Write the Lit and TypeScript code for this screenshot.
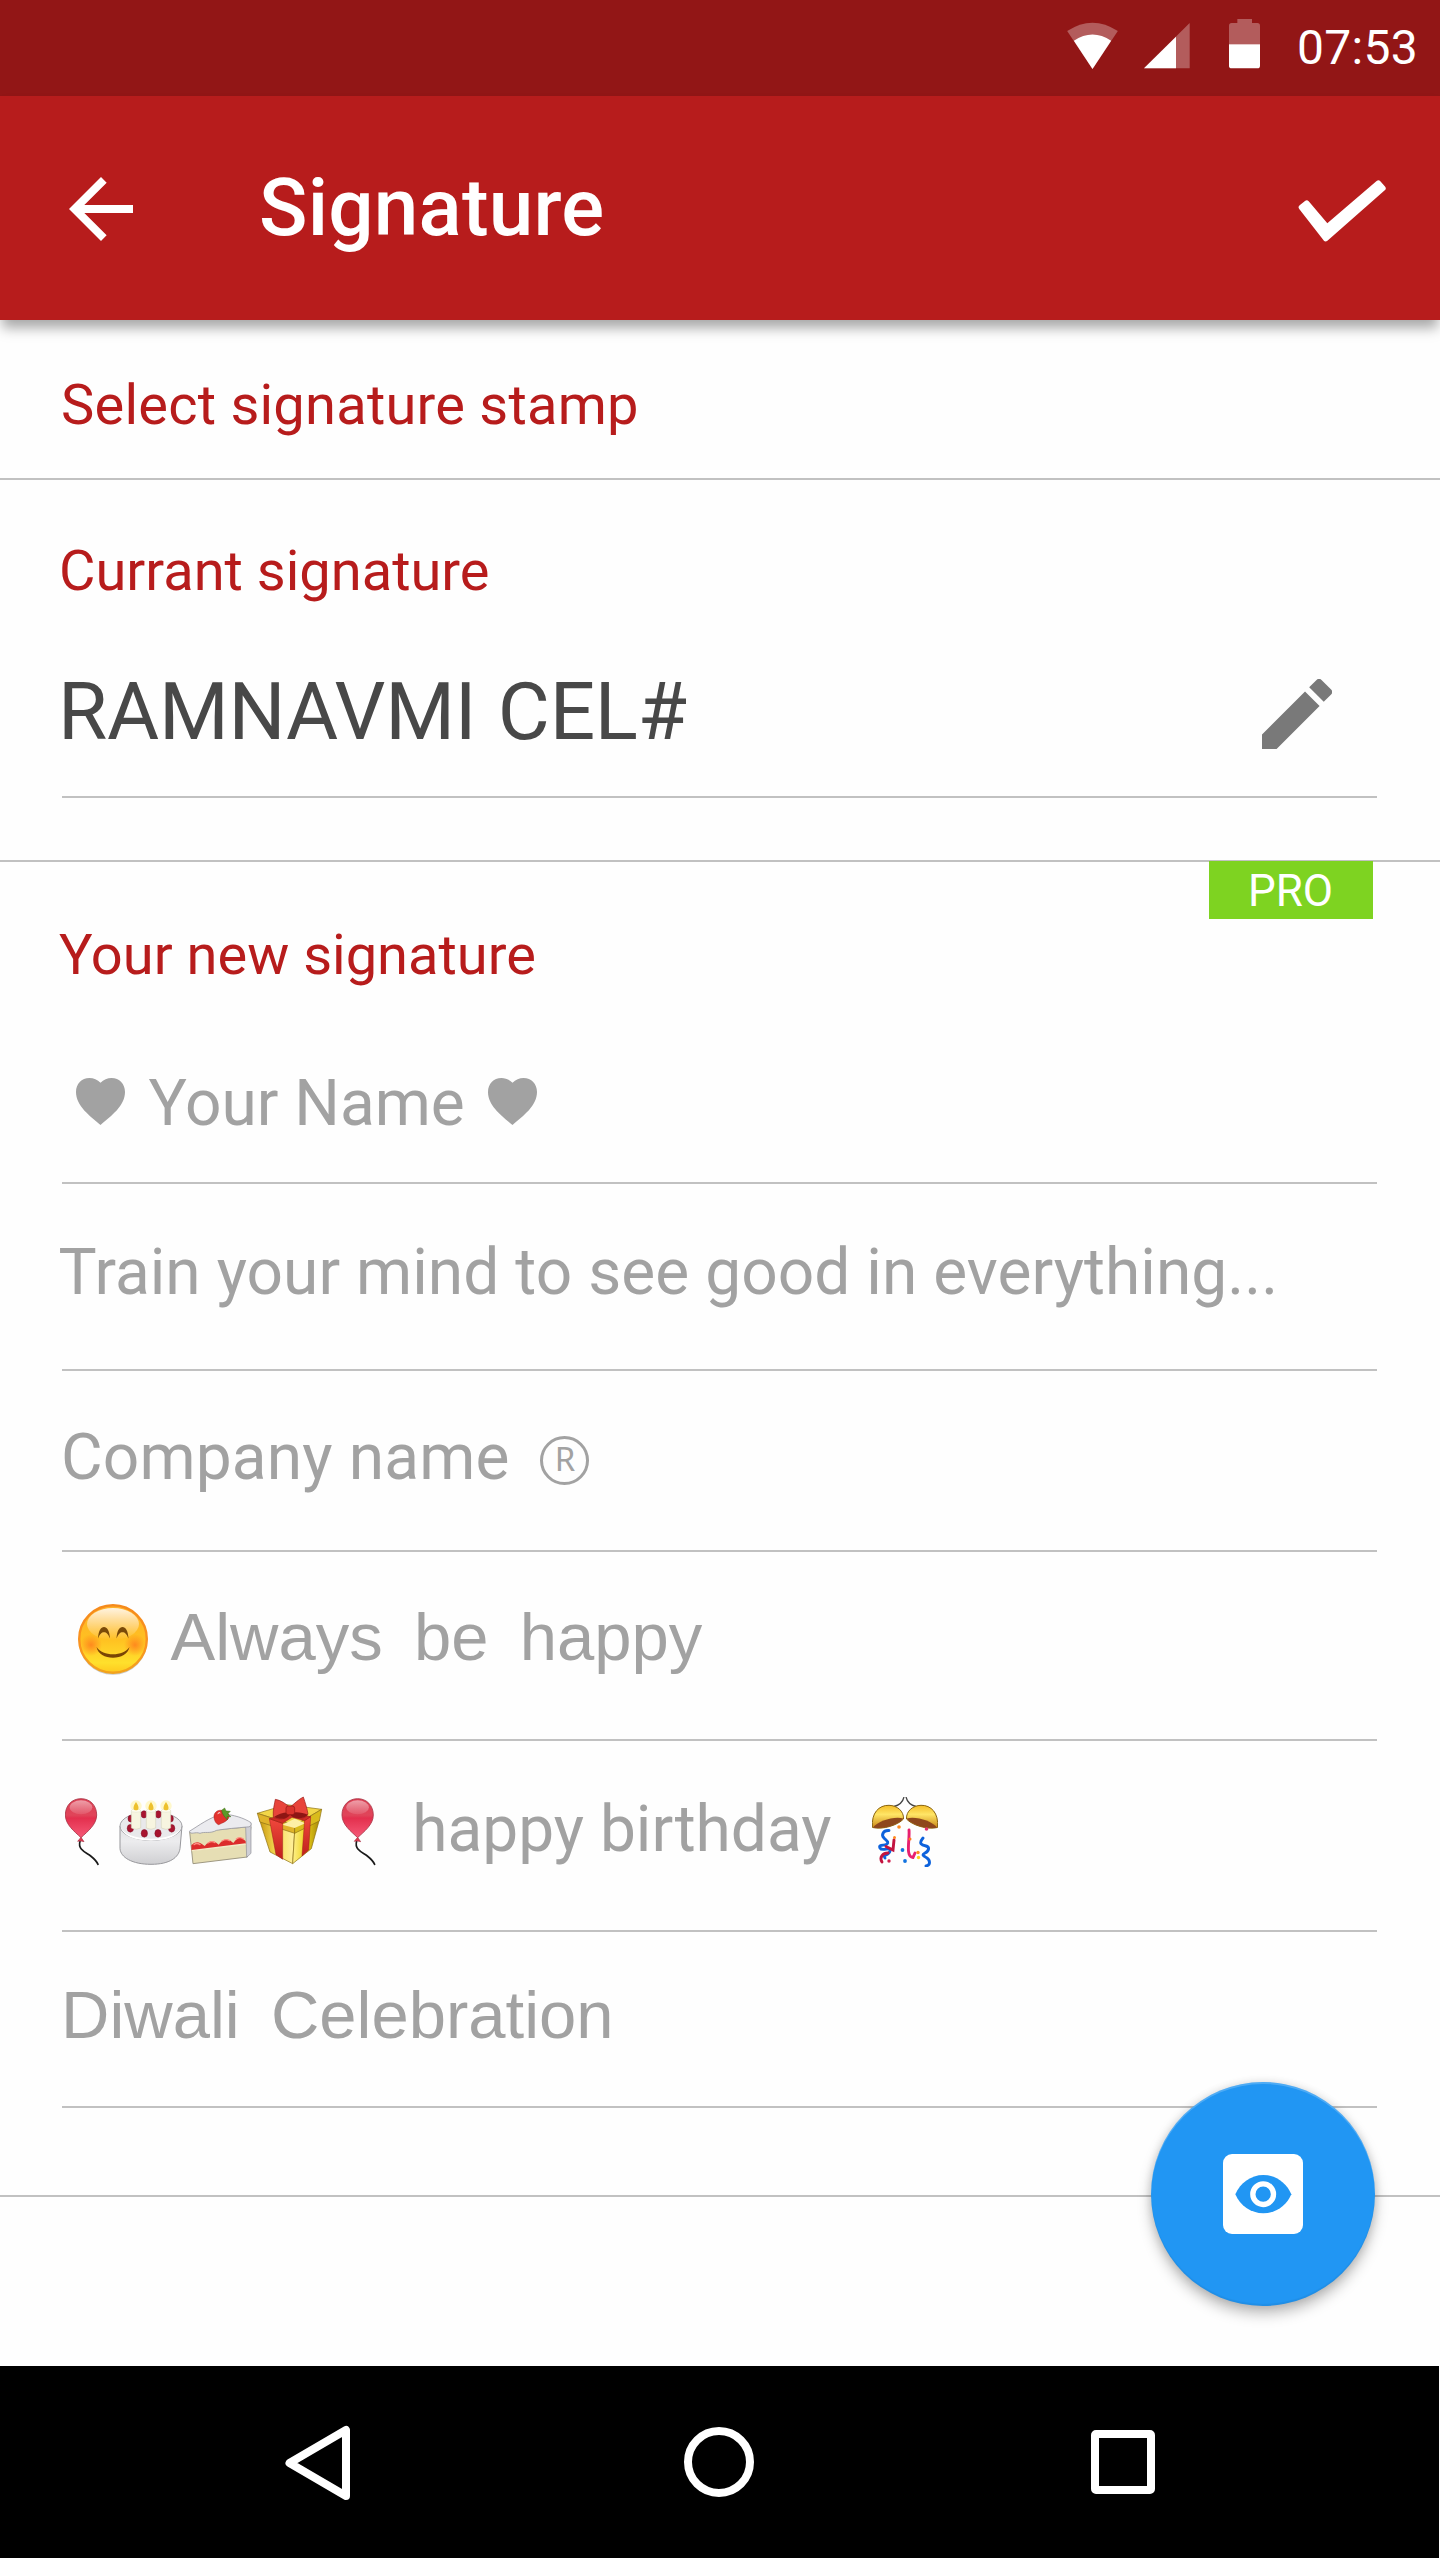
import { LitElement, html, svg, css } from "lit";
import { customElement } from "lit/decorators.js";

const wifi = html`<svg class="wifi" width="51" height="50" viewBox="79.5 56 153 150">
  <path d="M156 206L80 92Q156 42 232 92Z" fill="#fff" fill-opacity=".3"/>
  <path d="M156 206L100 121Q156 84 212 121Z" fill="#fff"/>
</svg>`;

const signal = html`<svg class="signal" width="46" height="50" viewBox="312 56 138 150">
  <path d="M312 204L449 68V204Z" fill="#fff" fill-opacity=".3"/>
  <path d="M312 204L408 109V204Z" fill="#fff"/>
</svg>`;

const battery = html`<svg class="battery" width="31" height="50" viewBox="567 56 93 150">
  <path d="M567 132V76q0-8 8-8H592V56H636V68H652q8 0 8 8V132Z" fill="#fff" fill-opacity=".3"/>
  <path d="M567 132H660V196q0 8-8 8H575q-8 0-8-8Z" fill="#fff"/>
</svg>`;

const arrow = html`<svg class="arrow" width="96" height="96" viewBox="0 0 24 24">
  <path fill="#fff" d="M20 11H7.83l5.59-5.59L12 4l-8 8 8 8 1.41-1.41L7.83 13H20v-2z"/>
</svg>`;

const check = html`<svg class="check" width="88" height="64" viewBox="775 536 264 192">
  <path d="M785 621L801 608L862 680L1016 548L1030 564L858 715Z" fill="#fff" stroke="#fff" stroke-width="16" stroke-linejoin="round"/>
</svg>`;

const pencil = html`<svg class="pencil" width="70" height="70" viewBox="3 3 18 18">
  <path fill="#797979" d="M3 17.25V21h3.75L17.81 9.94l-3.75-3.75L3 17.25zM20.71 7.04a.996.996 0 0 0 0-1.41l-2.34-2.34a.996.996 0 0 0-1.41 0l-1.83 1.83 3.75 3.75 1.83-1.83z"/>
</svg>`;

const heart = html`<svg class="heart" width="49" height="47" viewBox="0 0 49 47">
  <path fill="#a2a2a2" d="M24.5 4.8C21.500 1.500 17.500 0 13.500 0C5.500 0 0 6 0 14C0 28 14 38 24.500 47C35 38 49 28 49 14C49 6 43.500 0 35.500 0C31.500 0 27.500 1.500 24.500 4.800Z"/>
</svg>`;

const smile = html`<svg class="smile" width="70" height="72" viewBox="0 0 70 72">
  <defs>
    <linearGradient id="face" x1="0" y1="0" x2="0" y2="1">
      <stop offset="0" stop-color="#ffb02a"/><stop offset=".5" stop-color="#ffc021"/><stop offset=".85" stop-color="#ffe02c"/><stop offset="1" stop-color="#ffc81e"/>
    </linearGradient>
    <linearGradient id="rim" x1="0" y1="0" x2="0" y2="1">
      <stop offset="0" stop-color="#f58a1c"/><stop offset=".6" stop-color="#fb9420"/><stop offset="1" stop-color="#f2a31c"/>
    </linearGradient>
    <linearGradient id="gloss" x1="0" y1="0" x2="0" y2="1">
      <stop offset="0" stop-color="#fff" stop-opacity=".85"/><stop offset="1" stop-color="#fff" stop-opacity="0"/>
    </linearGradient>
    <radialGradient id="blush"><stop offset="0" stop-color="#ff7a1c" stop-opacity=".8"/><stop offset="1" stop-color="#ff7a1c" stop-opacity="0"/></radialGradient>
  </defs>
  <circle cx="35" cy="36.300" r="34.500" fill="#888" fill-opacity=".45"/>
  <circle cx="35" cy="35" r="33.800" fill="url(#face)" stroke="url(#rim)" stroke-width="2.400"/>
  <ellipse cx="35" cy="20" rx="26" ry="16" fill="url(#gloss)"/>
  <circle cx="13" cy="41" r="11" fill="url(#blush)"/>
  <circle cx="57" cy="41" r="11" fill="url(#blush)"/>
  <path d="M20 34.500C20.500 26.500 23 23 26 23S31.500 26.500 32 34.500C30 30 28.500 28.300 26 28.300S22 30 20 34.500Z" fill="#7a4a08"/>
  <path d="M38.500 34.500C39 26.500 41.500 23 44.500 23S50 26.500 50.500 34.500C48.500 30 47 28.300 44.500 28.300S40.500 30 38.500 34.500Z" fill="#7a4a08"/>
  <path d="M18.500 43C22 48 28 50.300 35 50.300S48 48 51.500 43C50 50 43 53.800 35 53.800S20 50 18.500 43Z" fill="#7a4505"/>
</svg>`;

const balloon = (x: number) => svg`<g transform="translate(${x} 0)">
  <path d="M120 214C112 240 140 248 152 258C162 266 170 274 174 283" fill="none" stroke="#1a1a1a" stroke-width="5" stroke-linecap="round"/>
  <path d="M123 86C150 86 170 106 170 135C170 164 143 184 123 203C103 184 76 164 76 135C76 106 96 86 123 86Z" fill="url(#balloon)" stroke="#a83245" stroke-width="2.500"/>
  <path d="M123 202L113 214Q122 211 132 215Z" fill="#e23a50" stroke="#a83245" stroke-width="2"/>
  <ellipse cx="123" cy="112" rx="34" ry="21" fill="url(#shine)"/>
</g>`;

const candle = (x: number) => svg`<g transform="translate(${x} 0)">
  <circle cx="0" cy="108" r="17" fill="#fff3a0" fill-opacity=".55"/>
  <path d="M-14 122V174Q0 182 14 174V122Z" fill="#f7f5e0" stroke="#cfcdb4" stroke-width="1.500"/>
  <ellipse cx="0" cy="122" rx="14" ry="4.500" fill="#fffef2" stroke="#cfcdb4" stroke-width="1"/>
  <path d="M0 96C10 110 10 121 0 121S-10 110 0 96Z" fill="#edc02c"/>
</g>`;

const party = html`<svg class="party" width="66" height="70" viewBox="0 0 66 70">
  <defs>
    <linearGradient id="bowl" x1="0" y1="0" x2="0" y2="1">
      <stop offset="0" stop-color="#f3bd28"/><stop offset=".4" stop-color="#ffe566"/><stop offset="1" stop-color="#c98512"/>
    </linearGradient>
  </defs>
  <path d="M22 9.500C28 8 31 4 32 0M44 9.500C38 8 35 4 34 0" fill="none" stroke="#444" stroke-width="1.300"/>
  <g>
    <path d="M.5 30.500C-1 16 7 8 17 8.300C25 8.500 32 14 31.500 22C26 28 11 33 .5 30.500Z" fill="url(#bowl)" stroke="#8a6410" stroke-width="1"/>
    <path d="M1 30.500C6 24 22 19 31.300 21.500C28 27 11 33 1 30.500Z" fill="#8e471c"/>
  </g>
  <g transform="translate(66 0) scale(-1 1)">
    <path d="M.5 30.500C-1 16 7 8 17 8.300C25 8.500 32 14 31.500 22C26 28 11 33 .5 30.500Z" fill="url(#bowl)" stroke="#8a6410" stroke-width="1"/>
    <path d="M1 30.500C6 24 22 19 31.300 21.500C28 27 11 33 1 30.500Z" fill="#8e471c"/>
  </g>
  <g fill="none" stroke-width="2.900" stroke-linecap="round">
    <path d="M17 33.500C11 33 9 38 12 41S17 45 15 47S6 47 8 51S19 49 18 54S10 57 13 61" stroke="#0d62dc"/>
    <path d="M22 43L21 53L14 49.500M16 56C11 56 7 60 10 65" stroke="#c2133f"/>
    <path d="M37 33C38 42 33 60 41 60.500L43 56" stroke="#e8206f"/>
    <path d="M51 41C46 47 50 48 54 49S57 54 53 56S52 59 55 61S59 68 54 69" stroke="#0d62dc"/>
  </g>
  <circle cx="27" cy="30" r="1.800" fill="#ff8a1e"/><circle cx="22.500" cy="40.500" r="1.500" fill="#ff8a1e"/>
  <circle cx="38" cy="42" r="1.500" fill="#ff7a1e"/><circle cx="54.500" cy="32" r="1.800" fill="#e0306f"/>
  <circle cx="30.500" cy="53" r="1.900" fill="#1273e0"/><circle cx="33" cy="64" r="1.900" fill="#1273e0"/>
  <circle cx="17" cy="64" r="1.700" fill="#d0204f"/><circle cx="46" cy="55.500" r="1.700" fill="#ff8a1e"/>
  <circle cx="46.500" cy="60.500" r="1.700" fill="#ffcf1e"/>
</svg>`;

const treats = html`<svg class="treats" width="311.670" height="71.670" viewBox="75 75 935 215">
  <defs>
    <linearGradient id="balloon" x1="0" y1="0" x2="0" y2="1">
      <stop offset="0" stop-color="#dc3c50"/><stop offset=".42" stop-color="#e0455a"/><stop offset=".5" stop-color="#e3304e"/><stop offset="1" stop-color="#f65a78"/>
    </linearGradient>
    <linearGradient id="shine" x1="0" y1="0" x2="0" y2="1"><stop offset="0" stop-color="#fff" stop-opacity=".5"/><stop offset="1" stop-color="#fff" stop-opacity=".1"/></linearGradient>
    <linearGradient id="icing" x1="0" y1="0" x2="0" y2="1"><stop offset="0" stop-color="#e2e2e4"/><stop offset=".4" stop-color="#ececee"/><stop offset="1" stop-color="#cfcfd2"/></linearGradient>
    <linearGradient id="gold" x1="0" y1="0" x2="1" y2="0"><stop offset="0" stop-color="#c8960c"/><stop offset=".5" stop-color="#f8e05a"/><stop offset="1" stop-color="#fff0a0"/></linearGradient>
    <linearGradient id="goldDark" x1="0" y1="0" x2="1" y2="0"><stop offset="0" stop-color="#fff08a"/><stop offset=".5" stop-color="#ecd018"/><stop offset="1" stop-color="#a88a0a"/></linearGradient>
    <linearGradient id="ribbon" x1="0" y1="0" x2="0" y2="1"><stop offset="0" stop-color="#f0483c"/><stop offset="1" stop-color="#c0201c"/></linearGradient>
  </defs>
  ${balloon(0)}
  <g>
    <path d="M240 168V236C242 262 276 283 333 283S416 262 420 236L426 168Z" fill="url(#icing)" stroke="#98989c" stroke-width="3"/>
    <ellipse cx="333" cy="168" rx="93" ry="43" fill="#e9e9eb" stroke="#a0a0a4" stroke-width="3"/>
    <path d="M242 172C250 198 284 212 333 212S416 198 424 172C414 193 380 206 333 206S252 193 242 172Z" fill="#fff"/>
    <g fill="#a8142f" stroke="#7c0e24" stroke-width="1.500">
      <ellipse cx="272" cy="146" rx="8" ry="10"/><ellipse cx="312" cy="133" rx="9" ry="11"/><ellipse cx="355" cy="133" rx="9" ry="11"/><ellipse cx="392" cy="146" rx="8" ry="10"/>
      <ellipse cx="271" cy="175" rx="9.500" ry="11.500"/><ellipse cx="313" cy="190" rx="9.500" ry="11.500"/><ellipse cx="354" cy="190" rx="9.500" ry="11.500"/><ellipse cx="395" cy="175" rx="9.500" ry="11.500"/>
    </g>
    ${candle(288)}${candle(333)}${candle(378)}
  </g>
  <g stroke-linejoin="round">
    <path d="M449 186L459 281L622 261L633 170Z" fill="#e6deb4" stroke="#8e8874" stroke-width="2.500"/>
    <path d="M617 170L633 160V250L620 262Z" fill="#cfcfd6" stroke="#8f8f96" stroke-width="2"/>
    <path d="M454 226Q470 206 494 228Q514 202 536 224Q556 196 580 219Q600 190 617 214V222L455 242Z" fill="#dc2c2c"/>
    <path d="M455 242L617 222" stroke="#f3ecca" stroke-width="4"/>
    <g fill="none" stroke="#ff8d80" stroke-width="4" stroke-linecap="round"><path d="M462 224Q470 217 480 224M504 219Q515 211 525 218M546 213Q558 205 569 212M589 207Q600 199 610 207"/></g>
    <path d="M448 184C478 166 508 142 548 132C580 134 612 144 633 158Q636 172 620 171C590 174 560 176 530 181C510 192 494 184 480 190C466 184 452 196 448 184Z" fill="#ebebef" stroke="#9a9aa2" stroke-width="2.500"/>
    <path d="M522 142C521 128 532 119 545 121C560 122 570 134 566 144C560 155 548 158 536 164C528 162 523 152 522 142Z" fill="#e3332e" stroke="#a31d1d" stroke-width="1.500"/>
    <path d="M545 121L554 114L558 123L571 124L563 132L573 140L561 140L562 150L552 138L547 129Z" fill="#5c9a28" stroke="#3d6e17" stroke-width="1.500"/>
    <path d="M533 131q5-5 8-2" stroke="#fff" stroke-width="3" fill="none"/>
  </g>
  <g stroke-linejoin="round">
    <path d="M658 148L690 246L758 281L764 184Z" fill="url(#gold)" stroke="#8a6d12" stroke-width="2"/>
    <path d="M764 184L758 281L814 236L838 150Z" fill="url(#goldDark)" stroke="#8a6d12" stroke-width="2"/>
    <path d="M652 130L740 104L845 118L764 166Z" fill="#f2d648" stroke="#8a6d12" stroke-width="2"/>
    <path d="M652 130L764 166V190L660 156Z" fill="#e0b32a" stroke="#8a6d12" stroke-width="2"/>
    <path d="M845 118L764 166V190L838 153Z" fill="#d9bb1c" stroke="#8a6d12" stroke-width="2"/>
    <path d="M727 164L764 146L796 160L764 174Z" fill="#fdf0a6"/>
    <path d="M688 146L728 160L728 268L708 254Z" fill="url(#ribbon)" stroke="#9c1c1a" stroke-width="1.500"/>
    <path d="M794 150L812 140L806 240L786 258Z" fill="url(#ribbon)" stroke="#9c1c1a" stroke-width="1.500"/>
    <path d="M688 146L752 128L812 140L794 152L756 142L728 160Z" fill="#cf2c25" stroke="#8e1513" stroke-width="1.500"/>
    <path d="M750 132C738 152 712 148 700 142C698 120 704 100 706 88C722 90 738 102 750 112C764 100 776 88 790 81C796 98 802 118 804 132C796 148 772 150 756 132Z" fill="#e8443a" stroke="#9c1c1a" stroke-width="2"/>
    <path d="M748 128C734 126 714 132 702 141C720 150 742 148 750 134C762 148 790 148 804 134C790 128 770 124 756 128Z" fill="#8d1614"/>
    <rect x="738" y="108" width="26" height="26" rx="7" fill="#d8332c" stroke="#8e1513" stroke-width="2"/>
  </g>
  ${balloon(830)}
</svg>`;

const eye = html`<svg class="eye" width="80" height="80" viewBox="309 312 240 240">
  <rect x="309" y="312" width="240" height="240" rx="27" fill="#fff"/>
  <path d="M346 433C360 399 393 375 430 375S500 399 514 433C500 467 467 490 430 490S360 467 346 433Z" fill="#2196f3"/>
  <circle cx="429.500" cy="432.500" r="31" fill="#2196f3" stroke="#fff" stroke-width="16"/>
</svg>`;

const navBack = html`<svg class="nav-back" width="72" height="80" viewBox="282 2422 72 80">
  <path d="M346 2430V2496L289.500 2463Z" fill="none" stroke="#fff" stroke-width="8" stroke-linejoin="round"/>
</svg>`;
const navHome = html`<svg class="nav-home" width="72" height="72" viewBox="0 0 72 72">
  <circle cx="36" cy="36" r="31" fill="none" stroke="#fff" stroke-width="8"/>
</svg>`;
const navRecent = html`<svg class="nav-recent" width="64" height="64" viewBox="0 0 64 64">
  <rect x="4" y="4" width="56" height="56" rx="1" fill="none" stroke="#fff" stroke-width="8" stroke-linejoin="round"/>
</svg>`;

@customElement("app-root")
export class AppRoot extends LitElement {
  static styles = css`
    :host { display: block; }
    svg { display: block; flex: none; }
    .screen { width: 1440px; height: 2558px; display: flex; flex-direction: column; background: #fefefe; position: relative; font-family: Roboto, "Noto Sans", sans-serif; overflow: hidden; }
    .status { height: 96px; flex: none; background: #921616; display: flex; align-items: center; padding-left: 1066.500px; box-sizing: border-box; color: #fff; font-size: 48px; letter-spacing: .28px; white-space: nowrap; }
    .wifi, .signal, .battery { margin-top: -9px; }
    .signal { margin-left: 26.500px; }
    .battery { margin-left: 39px; }
    .time { margin: -2px 0 0 37px; }
    .appbar { height: 224px; flex: none; background: #b71c1c; display: flex; align-items: center; padding: 0 53px; box-sizing: border-box; box-shadow: 0 10px 12px -2px rgba(0, 0, 0, .34); position: relative; }
    .arrow { margin-top: 2px; }
    .title { margin: 0 0 0 110px; color: #fff; font-size: 80px; font-weight: 500; letter-spacing: .22px; flex: 1; line-height: 96px; }
    .check { margin: 5px 1px 0 0; }
    .section { flex: none; border-bottom: 2px solid #c1c1c1; box-sizing: border-box; padding: 0 63px 0 62px; position: relative; }
    .heading { height: 160px; display: flex; align-items: center; padding: 12px 61px 0; }
    .label { color: #b71c1c; font-size: 56px; line-height: 80px; white-space: nowrap; }
    .heading .label { letter-spacing: .23px; }
    .current { height: 382px; padding-top: 51px; }
    .fresh { height: 1335px; padding-top: 53px; }
    .current .label, .fresh .label { margin-left: -3px; }
    .row { display: flex; align-items: center; box-sizing: border-box; border-bottom: 2px solid #c1c1c1; color: #a2a2a2; font-size: 64px; line-height: 80px; white-space: pre; }
    .sans { font-family: "Liberation Sans", Arial, sans-serif; font-size: 67px; word-spacing: -3px; }
    .value { height: 187px; padding-top: 16px; color: #484848; font-size: 80px; letter-spacing: -.27px; word-spacing: 2px; justify-content: space-between; }
    .value .text { margin-left: -4px; }
    .pencil { margin: 4px 45px 0 0; }
    .name { height: 189px; padding: 30px 0 0 14px; }
    .name .text { margin: 1px 23.500px 0 23.500px; }
    .heart { margin-top: -4px; }
    .quote { height: 187px; padding-bottom: 7px; letter-spacing: .05px; }
    .quote .text { margin-left: -3.500px; }
    .company { height: 181px; padding-bottom: 5px; letter-spacing: .15px; }
    .company .text { margin-left: -1px; }
    .mark { margin: 5px 0 0 30px; width: 49px; height: 49px; box-sizing: border-box; border: 3px solid #a2a2a2; border-radius: 50%; display: flex; align-items: center; justify-content: center; font: 33px/40px "Noto Sans", sans-serif; padding: 0 0 3px 2px; }
    .happy { height: 189px; padding: 0 0 17px 16px; }
    .smile { margin: 5px 22.500px 0 0; }
    .birthday { height: 191px; padding: 0 0 11px 3px; }
    .treats { margin: 1px 35.500px 0 0; }
    .party { margin: 4px 0 0 40px; }
    .diwali { height: 176px; padding-bottom: 8px; }
    .diwali .text { margin-left: -1px; }
    .badge { position: absolute; top: -1px; left: 1209px; width: 164px; height: 58px; background: #7ed321; color: #fff; font-size: 44px; line-height: 60px; text-align: center; text-indent: -1px; }
    .fab { position: absolute; left: 1151px; top: 2082px; width: 224px; height: 224px; border-radius: 50%; background: #2196f3; display: flex; align-items: center; justify-content: center; box-shadow: 0 8px 14px rgba(0, 0, 0, .26), 0 0 8px rgba(0, 0, 0, .12), inset 0 2px 0 rgba(255, 255, 255, .2), inset 0 -2px 1px rgba(0, 0, 0, .05); }
    .nav { margin-top: auto; width: 1439px; height: 192px; flex: none; background: #000; display: flex; align-items: center; padding-left: 282px; box-sizing: border-box; }
    .nav-home { margin-left: 329px; }
    .nav-recent { margin-left: 336px; }
  `;

  render() {
    return html`<div class="screen">
      <div class="status">${wifi}${signal}${battery}<span class="time">07:53</span></div>
      <header class="appbar">${arrow}<span class="title">Signature</span>${check}</header>
      <section class="section heading"><div class="label">Select signature stamp</div></section>
      <section class="section current">
        <div class="label">Currant signature</div>
        <div class="row value"><span class="text">RAMNAVMI CEL#</span>${pencil}</div>
      </section>
      <section class="section fresh">
        <span class="badge">PRO</span>
        <div class="label">Your new signature</div>
        <div class="row name">${heart}<span class="text">Your Name</span>${heart}</div>
        <div class="row quote"><span class="text">Train your mind to see good in everything...</span></div>
        <div class="row company"><span class="text">Company name</span><span class="mark">R</span></div>
        <div class="row sans happy">${smile}<span class="text">Always  be  happy</span></div>
        <div class="row birthday">${treats}<span class="text">happy birthday</span>${party}</div>
        <div class="row sans diwali"><span class="text">Diwali  Celebration</span></div>
      </section>
      <div class="fab">${eye}</div>
      <nav class="nav">${navBack}${navHome}${navRecent}</nav>
    </div>`;
  }
}
